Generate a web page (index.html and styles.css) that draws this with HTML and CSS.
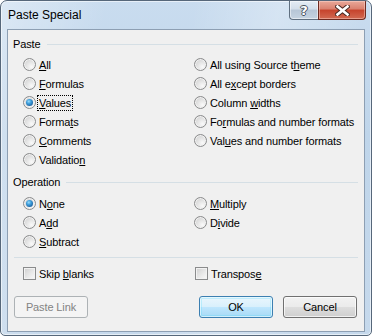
FILE: index.html
```html
<!DOCTYPE html>
<html>
<head>
<meta charset="utf-8">
<link rel="stylesheet" href="styles.css">
</head>
<body>
<div class="window">
  <div class="titlebar">
    <div class="title">Paste Special</div>
    <div class="caption-buttons">
      <div class="cb help"><span class="help-glyph">?</span></div>
      <div class="cb close">
        <svg width="15" height="11" viewBox="0 0 15 11">
          <path d="M2.5 1.5 L12.5 9.5 M12.5 1.5 L2.5 9.5" stroke="#4a2a24" stroke-width="4.6" stroke-linecap="square" fill="none"/>
          <path d="M2.5 1.5 L12.5 9.5 M12.5 1.5 L2.5 9.5" stroke="#ffffff" stroke-width="2.6" stroke-linecap="square" fill="none"/>
        </svg>
      </div>
    </div>
  </div>
  <div class="client">
    <div class="group-head"><span>Paste</span></div>
    <div class="options paste-opts">
      <label class="opt"><span class="radio"></span><span class="txt"><u>A</u>ll</span></label>
      <label class="opt"><span class="radio"></span><span class="txt"><u>F</u>ormulas</span></label>
      <label class="opt"><span class="radio checked"></span><span class="txt focus"><u>V</u>alues</span></label>
      <label class="opt"><span class="radio"></span><span class="txt">Forma<u>t</u>s</span></label>
      <label class="opt"><span class="radio"></span><span class="txt"><u>C</u>omments</span></label>
      <label class="opt"><span class="radio"></span><span class="txt">Validatio<u>n</u></span></label>
      <label class="opt"><span class="radio"></span><span class="txt">All using Source t<u>h</u>eme</span></label>
      <label class="opt"><span class="radio"></span><span class="txt">All e<u>x</u>cept borders</span></label>
      <label class="opt"><span class="radio"></span><span class="txt">Column <u>w</u>idths</span></label>
      <label class="opt"><span class="radio"></span><span class="txt">Fo<u>r</u>mulas and number formats</span></label>
      <label class="opt"><span class="radio"></span><span class="txt">Val<u>u</u>es and number formats</span></label>
    </div>
    <div class="group-head op-head"><span>Operation</span></div>
    <div class="options op-opts">
      <label class="opt"><span class="radio checked"></span><span class="txt">N<u>o</u>ne</span></label>
      <label class="opt"><span class="radio"></span><span class="txt">A<u>d</u>d</span></label>
      <label class="opt"><span class="radio"></span><span class="txt"><u>S</u>ubtract</span></label>
      <label class="opt"><span class="radio"></span><span class="txt"><u>M</u>ultiply</span></label>
      <label class="opt"><span class="radio"></span><span class="txt">D<u>i</u>vide</span></label>
    </div>
    <div class="sep"></div>
    <div class="checks">
      <label class="opt"><span class="check"></span><span class="txt">Skip <u>b</u>lanks</span></label>
      <label class="opt"><span class="check"></span><span class="txt">Transpos<u>e</u></span></label>
    </div>
    <div class="buttons">
      <button class="btn disabled" disabled>Paste Link</button>
      <span class="spacer"></span>
      <button class="btn default">OK</button>
      <button class="btn">Cancel</button>
    </div>
  </div>
</div>
</body>
</html>
```

FILE: styles.css
```css
html, body {
  margin: 0;
  padding: 0;
  background: #ffffff;
}
body {
  width: 372px;
  height: 336px;
  overflow: hidden;
  font-family: "Liberation Sans", Arial, sans-serif;
  font-size: 11px;
  letter-spacing: -0.12px;
  color: #000;
}
.window {
  box-sizing: border-box;
  width: 372px;
  height: 336px;
  border: 1px solid #56677a;
  border-radius: 7px 7px 5px 5px;
  background:
    linear-gradient(100deg, rgba(255,255,255,0.35) 0%, rgba(255,255,255,0) 25%, rgba(255,255,255,0) 45%, rgba(255,255,255,0.25) 65%, rgba(255,255,255,0) 85%),
    linear-gradient(180deg, #c9dcef 0%, #bfd5ea 40%, #c6d9ec 100%);
  box-shadow: inset 0 0 0 1px rgba(255,255,255,0.55);
  display: flex;
  flex-direction: column;
  overflow: hidden;
}
.titlebar {
  height: 28px;
  display: flex;
  align-items: flex-start;
  flex: none;
}
.title {
  padding-left: 7px;
  padding-top: 6px;
  font-size: 12px;
  line-height: 16px;
  letter-spacing: 0;
  color: #000;
}
.caption-buttons {
  margin-left: auto;
  margin-right: 5px;
  display: flex;
}
.cb {
  box-sizing: border-box;
  height: 19px;
  display: flex;
  align-items: center;
  justify-content: center;
  border: 1px solid #5f6f80;
  border-top: none;
}
.help {
  width: 29px;
  border-radius: 0 0 0 4px;
  border-right: none;
  background: linear-gradient(180deg, #e4ecf4 0%, #d3deea 45%, #b7c6d6 50%, #c5d3e1 100%);
  box-shadow: inset 0 0 0 1px rgba(255,255,255,0.5);
}
.help-glyph {
  font-family: "DejaVu Sans", sans-serif;
  font-weight: bold;
  font-size: 13px;
  line-height: 13px;
  letter-spacing: 0;
  color: #ffffff;
  text-shadow: -1px 0 #47525e, 1px 0 #47525e, 0 -1px #47525e, 0 1px #47525e;
}
.close {
  width: 48px;
  border-color: #6e2a20;
  border-radius: 0 0 4px 0;
  background: linear-gradient(180deg, #e9a99a 0%, #d9806e 45%, #c6432c 50%, #d26a52 100%);
  box-shadow: inset 0 0 0 1px rgba(255,220,210,0.45);
}
.client {
  flex: 1;
  margin: 0 6px 3px 6px;
  border: 1px solid #8d9fb3;
  background: #f0f0f0;
  padding: 7px 6px 0 5px;
  display: flex;
  flex-direction: column;
}
.group-head {
  display: flex;
  align-items: center;
  height: 15px;
  line-height: 15px;
}
.group-head::after {
  content: "";
  flex: 1;
  margin-left: 6px;
  border-top: 1px solid #d5dfe5;
  margin-top: -1px;
}
.op-head {
  margin-top: 6px;
}
.options {
  display: grid;
  grid-auto-flow: column;
  grid-template-columns: 171px 1fr;
  padding-left: 10px;
}
.paste-opts {
  margin-top: 3px;
  grid-template-rows: repeat(6, 19px);
}
.op-opts {
  margin-top: 4px;
  grid-template-rows: repeat(3, 19px);
}
.opt {
  display: flex;
  align-items: center;
  height: 19px;
  white-space: nowrap;
}
.txt {
  line-height: 14px;
  padding: 0 1px;
  margin-left: 1px;
  border: 1px solid transparent;
}
.txt u {
  text-decoration: underline;
  text-underline-offset: 1px;
}
.focus {
  border: 1px dotted #000;
}
.radio {
  box-sizing: border-box;
  width: 13px;
  height: 13px;
  border-radius: 50%;
  border: 1px solid #8a8b8c;
  background: radial-gradient(circle at 68% 72%, #fafafa 0%, #e6e6e6 40%, #c9c9c9 100%);
  box-shadow: inset 0 0 0 1px #f2f2f2;
  flex: none;
  position: relative;
}
.radio.checked::after {
  content: "";
  position: absolute;
  left: 2px;
  top: 2px;
  width: 7px;
  height: 7px;
  border-radius: 50%;
  background: radial-gradient(circle at 40% 35%, #9adcfb 0%, #3f9fdc 35%, #1a5e9c 80%, #174b7c 100%);
}
.sep {
  margin-top: 6px;
  margin-left: 1px;
  border-top: 1px solid #d5dfe5;
}
.checks {
  display: grid;
  grid-template-columns: 172px 1fr;
  padding-left: 10px;
  margin-top: 6px;
}
.check {
  box-sizing: border-box;
  width: 13px;
  height: 13px;
  border: 1px solid #8a8b8c;
  background: linear-gradient(135deg, #cfcfcf 0%, #e8e8e8 55%, #fafafa 100%);
  box-shadow: inset 0 0 0 1px #f2f2f2;
  flex: none;
}
.buttons {
  display: flex;
  margin-top: 13px;
  padding-left: 1px;
  padding-right: 1px;
}
.spacer {
  flex: 1;
}
.btn {
  box-sizing: border-box;
  width: 74px;
  height: 22px;
  margin: 0;
  padding: 0;
  border: 1px solid #707070;
  border-radius: 3px;
  background: linear-gradient(180deg, #f2f2f2 0%, #ebebeb 48%, #dddddd 52%, #cfcfcf 100%);
  box-shadow: inset 0 0 0 1px rgba(255,255,255,0.7);
  font-family: "Liberation Sans", Arial, sans-serif;
  font-size: 11px;
  letter-spacing: -0.12px;
  color: #000;
}
.btn + .btn {
  margin-left: 10px;
}
.default {
  border-color: #3c7fb1;
  background: linear-gradient(180deg, #eaf6fd 0%, #d9f0fc 48%, #bee6fd 52%, #a7d9f5 100%);
  box-shadow: inset 0 0 0 1px rgba(255,255,255,0.6), inset 0 0 0 2px rgba(72,216,251,0.25);
}
.disabled {
  border-color: #adb2b5;
  background: #f4f4f4;
  color: #838383;
  box-shadow: none;
}
```
